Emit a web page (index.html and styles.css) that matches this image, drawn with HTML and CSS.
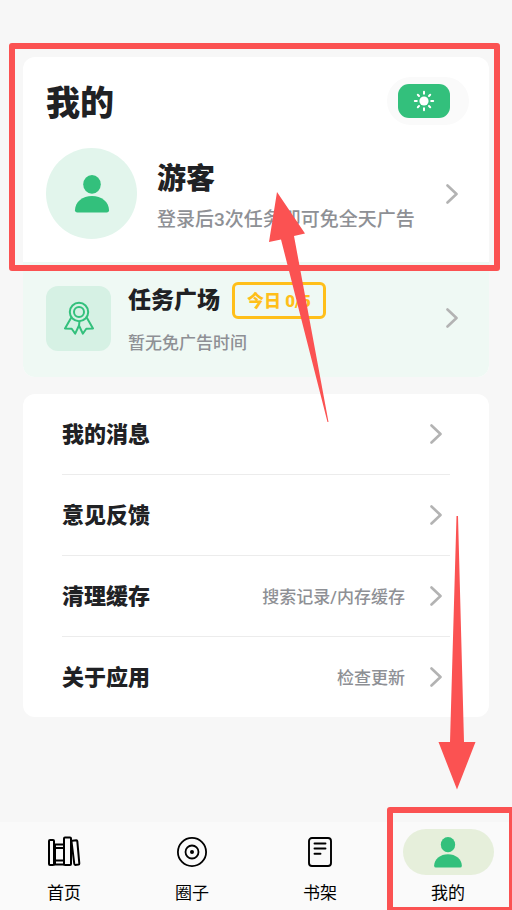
FILE: index.html
```html
<!DOCTYPE html>
<html lang="zh-CN">
<head>
<meta charset="utf-8">
<meta name="viewport" content="width=device-width, initial-scale=1">
<title>我的</title>
<link rel="stylesheet" href="styles.css">
</head>
<body>
<svg class="defs" aria-hidden="true">
  <symbol id="person" viewBox="0 0 36 38">
    <ellipse cx="18" cy="9.4" rx="8.8" ry="9.3"/>
    <path d="M1 35.2C1 27 8.6 21 18 21s17 6 17 14.2q0 2.3-2.3 2.3H3.3Q1 37.500 1 35.200z"/>
  </symbol>
  <symbol id="chevron" viewBox="0 0 12 20">
    <path d="M1.500 1.500L10.500 10l-9 8.500" fill="none" stroke="currentColor" stroke-width="2.600" stroke-linecap="round" stroke-linejoin="round"/>
  </symbol>
</svg>
<main class="page">
  <section class="card">
    <div class="account">
      <header class="top">
        <h1>我的</h1>
        <label class="theme">
          <input type="checkbox" checked aria-label="日间模式">
          <svg class="sun" viewBox="0 0 22 22" aria-hidden="true">
            <circle cx="11" cy="11" r="4.600" fill="#fff"/>
            <path d="M11 1.800v2M11 18.200v2M1.800 11h2M18.200 11h2M4.800 4.800l1.200 1.200M16 16l1.200 1.200M4.800 17.200l1.200-1.200M16 6l1.200-1.200" stroke="#fff" stroke-width="2" stroke-linecap="round"/>
          </svg>
        </label>
      </header>
      <a class="profile" href="#login">
        <span class="avatar"><svg class="person"><use href="#person"/></svg></span>
        <span class="who">
          <strong class="name">游客</strong>
          <span class="hint">登录后3次任务即可免全天广告</span>
        </span>
        <svg class="chevron"><use href="#chevron"/></svg>
      </a>
    </div>
    <a class="tasks" href="#tasks">
      <span class="medal">
        <svg viewBox="0 0 32 34" fill="none" stroke="#33c07c" stroke-width="2" stroke-linejoin="round" aria-hidden="true">
          <circle cx="16" cy="11" r="9.200"/>
          <circle cx="16" cy="11" r="5"/>
          <path d="M8.300 16.500L2 27.500l6.700.2 3.500 5L16 24.500l.5-4.200M23.700 16.500L30 27.500l-6.700.2-3.500 5L16 24.500"/>
        </svg>
      </span>
      <span class="task-text">
        <span class="task-head"><strong>任务广场</strong><span class="badge">今日 0/5</span></span>
        <span class="task-note">暂无免广告时间</span>
      </span>
      <svg class="chevron"><use href="#chevron"/></svg>
    </a>
  </section>
  <ul class="list">
    <li><a href="#messages"><strong>我的消息</strong><svg class="chevron"><use href="#chevron"/></svg></a></li>
    <li><a href="#feedback"><strong>意见反馈</strong><svg class="chevron"><use href="#chevron"/></svg></a></li>
    <li><a href="#cache"><strong>清理缓存</strong><span class="value">搜索记录/内存缓存</span><svg class="chevron"><use href="#chevron"/></svg></a></li>
    <li><a href="#about"><strong>关于应用</strong><span class="value">检查更新</span><svg class="chevron"><use href="#chevron"/></svg></a></li>
  </ul>
</main>
<nav class="tabs">
  <a href="#home">
    <span class="pill"><svg width="34" height="34" viewBox="0 0 34 34" fill="none" stroke="#000" stroke-width="2" stroke-linejoin="round" aria-hidden="true">
      <rect x="2" y="5" width="5" height="25" rx="1"/>
      <path d="M7 9.500h10M7 13h10M7 25.500h10M7 29.500h10M8 9.500v20"/>
      <rect x="17" y="2.500" width="7" height="27.500" rx="1"/>
      <path d="M25.200 5.700l4.200-.4q.8 0 .9.800l2 22.300q0 1-.8 1.200l-3.200.3q-.9 0-1-.9L24.500 6.700q0-.9.700-1z"/>
    </svg></span>
    <span>首页</span>
  </a>
  <a href="#circle">
    <span class="pill"><svg width="34" height="34" viewBox="0 0 34 34" fill="none" stroke="#000" stroke-width="1.800" aria-hidden="true">
      <circle cx="17" cy="17" r="14.100"/><circle cx="17" cy="17" r="6.500"/><circle cx="17" cy="17" r="2" fill="#000" stroke="none"/>
    </svg></span>
    <span>圈子</span>
  </a>
  <a href="#shelf">
    <span class="pill"><svg width="34" height="34" viewBox="0 0 34 34" fill="none" stroke="#000" stroke-width="1.900" stroke-linecap="round" aria-hidden="true">
      <rect x="6" y="3" width="22" height="28" rx="3"/><path d="M11.500 8.500h11M11.500 13.500h11M11.500 18.800h6"/>
    </svg></span>
    <span>书架</span>
  </a>
  <a href="#me" aria-current="page">
    <span class="pill"><svg class="person"><use href="#person"/></svg></span>
    <span>我的</span>
  </a>
</nav>
<svg class="marks" viewBox="0 0 512 910" aria-hidden="true">
  <g fill="none" stroke="#fb5252" stroke-width="6" stroke-linejoin="round">
    <rect x="12" y="46" width="485" height="222"/>
    <rect x="390" y="810" width="122" height="100"/>
  </g>
  <g fill="#fb5252">
    <path d="M277 192L305 233.500l-11 2.500L328.500 422h-1L281 239.500l-12 2.500z"/>
    <path d="M456.500 516h1.500L464 742h11.500L457 789.500 438.500 742H450z"/>
  </g>
</svg>
</body>
</html>
```

FILE: styles.css
```css
* {
  box-sizing: border-box;
}

body {
  position: relative;
  display: flex;
  flex-direction: column;
  min-height: 100vh;
  margin: 0;
  overflow: hidden;
  background: #f7f7f7;
  color: #202124;
  font-family: Roboto, "Noto Sans CJK SC", sans-serif;
}

a {
  color: inherit;
  text-decoration: none;
}

h1,
strong {
  font-weight: 900;
}

.defs {
  position: absolute;
  width: 0;
  height: 0;
}

.page {
  display: flex;
  flex: 1;
  flex-direction: column;
  gap: 17px;
  padding: 57px 23px 0;
}

.card,
.list {
  border-radius: 12px;
  background: #fff;
  overflow: hidden;
}

.account {
  padding: 20px 20px 23px 23px;
}

.top {
  display: flex;
  align-items: center;
  justify-content: space-between;
}

h1 {
  margin: 0;
  padding-top: 4px;
  font-size: 34px;
  line-height: 44px;
}

.theme {
  display: grid;
  align-items: center;
  width: 82px;
  height: 48px;
  padding-left: 11px;
  border-radius: 24px;
  background: #fafafa;
}

.theme input,
.sun {
  grid-area: 1 / 1;
}

.theme input {
  width: 52px;
  height: 34px;
  margin: 0;
  appearance: none;
  border-radius: 11px;
  background: #33c07c;
}

.sun {
  width: 22px;
  height: 22px;
  margin-left: 15px;
}

.profile {
  display: flex;
  align-items: center;
  margin-top: 23px;
  padding-right: 11px;
}

.avatar {
  display: grid;
  place-items: center;
  width: 91px;
  height: 91px;
  border-radius: 50%;
  background: #e2f5ec;
}

.person {
  width: 36px;
  height: 38px;
  fill: #33c07c;
}

.who {
  display: flex;
  flex: 1;
  flex-direction: column;
  gap: 6px;
  margin-left: 20px;
  padding-top: 4px;
}

.name {
  font-size: 29px;
  line-height: 42px;
}

.hint {
  color: #8e9095;
  font-size: 19px;
  font-weight: 500;
  line-height: 28px;
}

.chevron {
  flex: none;
  width: 12px;
  height: 20px;
  color: #b3b3b3;
}

.tasks {
  display: flex;
  align-items: center;
  padding: 19px 31px 22px 23px;
  background: #eff9f4;
}

.medal {
  display: grid;
  place-items: center;
  width: 65px;
  height: 65px;
  border-radius: 12px;
  background: #d6f1e4;
}

.medal svg {
  width: 32px;
  height: 34px;
}

.task-text {
  display: flex;
  flex: 1;
  flex-direction: column;
  gap: 12px;
  margin-left: 17px;
}

.task-head {
  display: flex;
  align-items: center;
  gap: 12px;
  font-size: 23px;
  line-height: 36px;
}

.task-head strong {
  padding-top: 2px;
}

.badge {
  padding: 2px 12px 0;
  border: 3px solid #ffbf1a;
  border-radius: 6px;
  color: #ffbf1a;
  font-size: 17px;
  font-weight: 900;
  line-height: 29px;
}

.task-note {
  color: #8e9095;
  font-size: 17px;
  font-weight: 500;
  line-height: 24px;
}

.list {
  margin: 0;
  padding: 0 39px;
  list-style: none;
}

.list a {
  display: flex;
  align-items: center;
  height: 80px;
  padding-right: 8px;
}

.list li + li {
  border-top: 1px solid #ececec;
}

.list strong {
  flex: 1;
  padding-top: 2px;
  font-size: 22px;
  line-height: 32px;
}

.value {
  margin-right: 25px;
  padding-top: 2px;
  color: #8e9095;
  font-size: 17px;
  font-weight: 500;
  line-height: 24px;
}

.tabs {
  display: grid;
  grid-template-columns: repeat(4, 1fr);
  padding: 7px 0 5px;
  background: #fafafa;
}

.tabs a {
  display: flex;
  flex-direction: column;
  align-items: center;
  gap: 6px;
  color: #000;
  font-size: 17px;
  line-height: 24px;
}

.pill {
  display: grid;
  place-items: center;
  width: 91px;
  height: 46px;
  border-radius: 23px;
}

.tabs [aria-current] .pill {
  background: #e6efdb;
}

.tabs .person {
  width: 30px;
  height: 31px;
}

.marks {
  position: absolute;
  top: 0;
  left: 0;
  width: 100%;
  pointer-events: none;
}
```
